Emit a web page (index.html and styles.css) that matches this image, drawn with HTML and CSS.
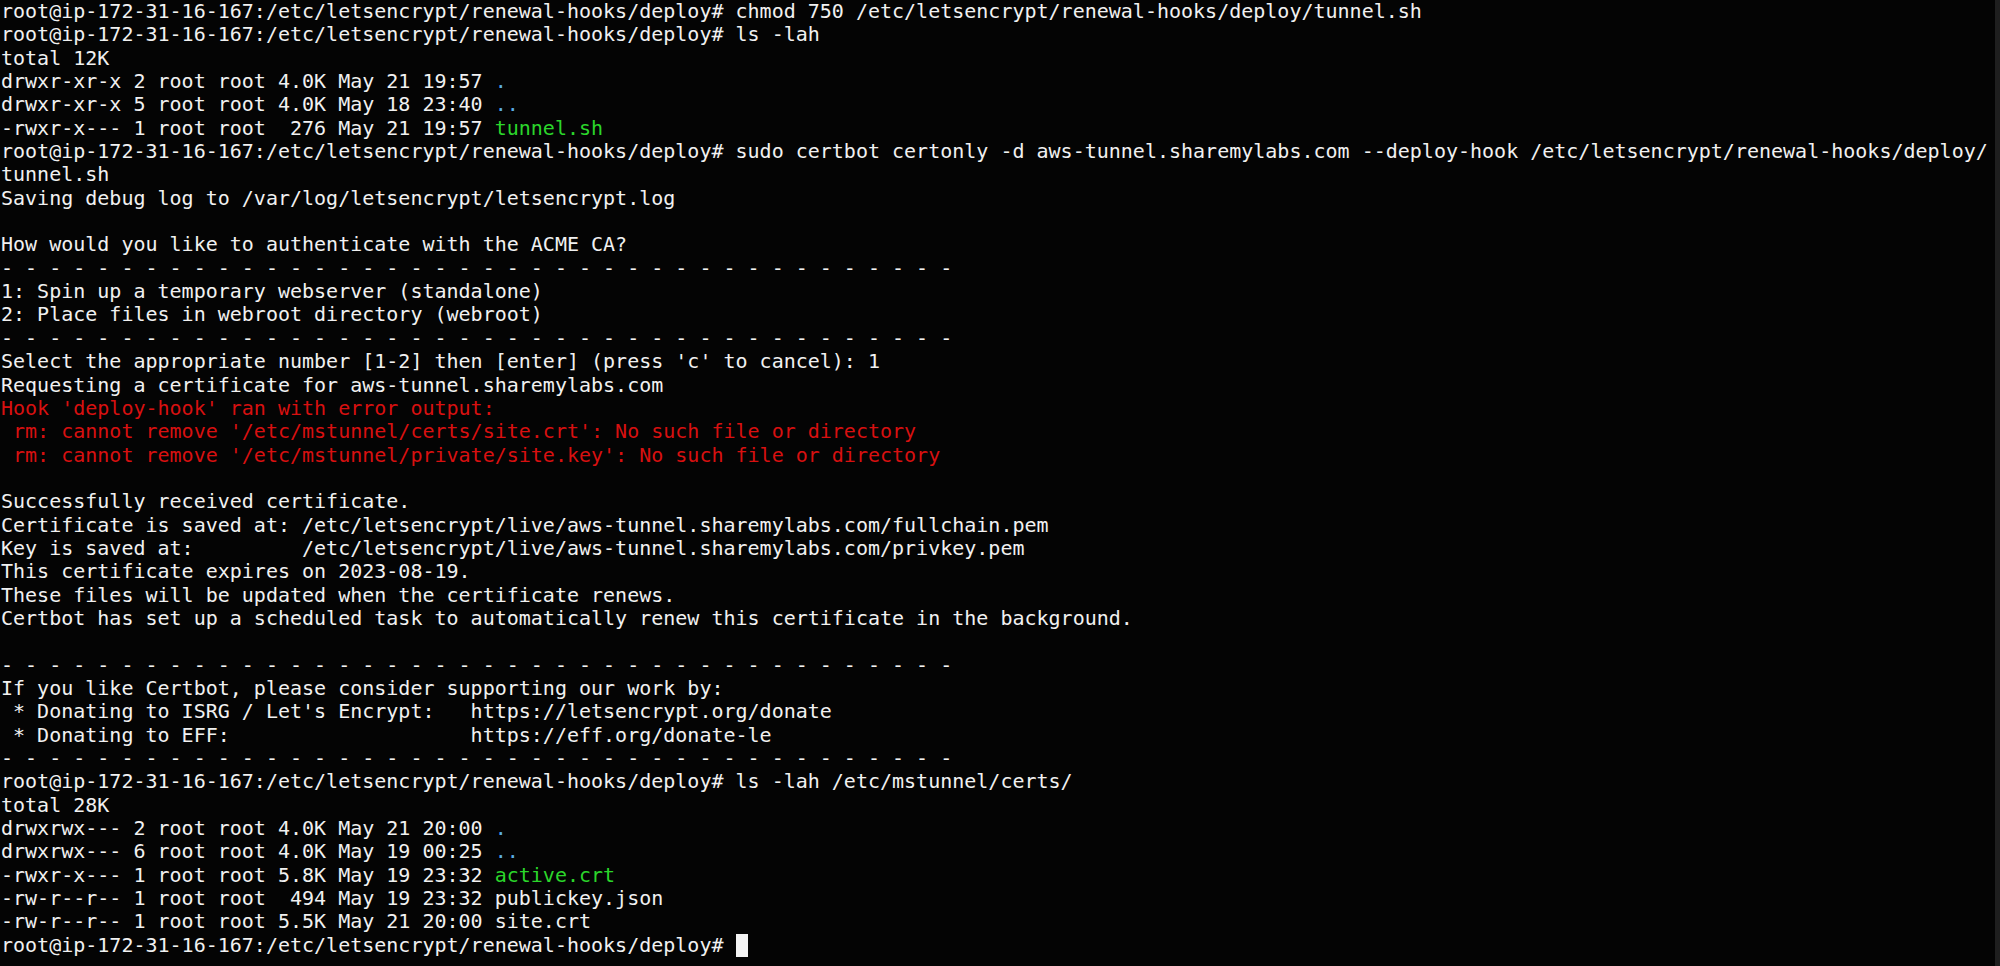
FILE: index.html
```html
<!DOCTYPE html>
<html>
<head>
<meta charset="utf-8">
<link rel="stylesheet" href="styles.css">
</head>
<body>
<div class="terminal">
<pre class="screen">root@ip-172-31-16-167:/etc/letsencrypt/renewal-hooks/deploy# chmod 750 /etc/letsencrypt/renewal-hooks/deploy/tunnel.sh
root@ip-172-31-16-167:/etc/letsencrypt/renewal-hooks/deploy# ls -lah
total 12K
drwxr-xr-x 2 root root 4.0K May 21 19:57 <span class="dir">.</span>
drwxr-xr-x 5 root root 4.0K May 18 23:40 <span class="dir">..</span>
-rwxr-x--- 1 root root  276 May 21 19:57 <span class="exe">tunnel.sh</span>
root@ip-172-31-16-167:/etc/letsencrypt/renewal-hooks/deploy# sudo certbot certonly -d aws-tunnel.sharemylabs.com --deploy-hook /etc/letsencrypt/renewal-hooks/deploy/
tunnel.sh
Saving debug log to /var/log/letsencrypt/letsencrypt.log

How would you like to authenticate with the ACME CA?
- - - - - - - - - - - - - - - - - - - - - - - - - - - - - - - - - - - - - - - -
1: Spin up a temporary webserver (standalone)
2: Place files in webroot directory (webroot)
- - - - - - - - - - - - - - - - - - - - - - - - - - - - - - - - - - - - - - - -
Select the appropriate number [1-2] then [enter] (press 'c' to cancel): 1
Requesting a certificate for aws-tunnel.sharemylabs.com
<span class="err">Hook 'deploy-hook' ran with error output:
 rm: cannot remove '/etc/mstunnel/certs/site.crt': No such file or directory
 rm: cannot remove '/etc/mstunnel/private/site.key': No such file or directory</span>

Successfully received certificate.
Certificate is saved at: /etc/letsencrypt/live/aws-tunnel.sharemylabs.com/fullchain.pem
Key is saved at:         /etc/letsencrypt/live/aws-tunnel.sharemylabs.com/privkey.pem
This certificate expires on 2023-08-19.
These files will be updated when the certificate renews.
Certbot has set up a scheduled task to automatically renew this certificate in the background.

- - - - - - - - - - - - - - - - - - - - - - - - - - - - - - - - - - - - - - - -
If you like Certbot, please consider supporting our work by:
 * Donating to ISRG / Let's Encrypt:   https://letsencrypt.org/donate
 * Donating to EFF:                    https://eff.org/donate-le
- - - - - - - - - - - - - - - - - - - - - - - - - - - - - - - - - - - - - - - -
root@ip-172-31-16-167:/etc/letsencrypt/renewal-hooks/deploy# ls -lah /etc/mstunnel/certs/
total 28K
drwxrwx--- 2 root root 4.0K May 21 20:00 <span class="dir">.</span>
drwxrwx--- 6 root root 4.0K May 19 00:25 <span class="dir">..</span>
-rwxr-x--- 1 root root 5.8K May 19 23:32 <span class="exe">active.crt</span>
-rw-r--r-- 1 root root  494 May 19 23:32 publickey.json
-rw-r--r-- 1 root root 5.5K May 21 20:00 site.crt
root@ip-172-31-16-167:/etc/letsencrypt/renewal-hooks/deploy# <span class="cursor"> </span></pre>
<div class="scrollbar"></div>
</div>
</body>
</html>
```
FILE: styles.css
```css
html, body {
  margin: 0;
  padding: 0;
  background: #040404;
  height: 100%;
  overflow: hidden;
}
.terminal {
  position: relative;
  width: 2000px;
  height: 966px;
  background: #040404;
}
.screen {
  margin: 0;
  padding: 0 0 0 1px;
  font-family: "DejaVu Sans Mono", monospace;
  font-size: 20px;
  line-height: 23.35px;
  color: #f1f1f1;
  white-space: pre;
}
.dir { color: #5aaee4; }
.exe { color: #2bd62b; }
.err { color: #d81010; }
.cursor {
  display: inline-block;
  width: 12px;
  height: 23px;
  background: #f4f4f4;
  vertical-align: top;
}
.scrollbar {
  position: absolute;
  top: 0;
  right: 0;
  width: 5px;
  height: 966px;
  background: #1f1f1f;
}
```
